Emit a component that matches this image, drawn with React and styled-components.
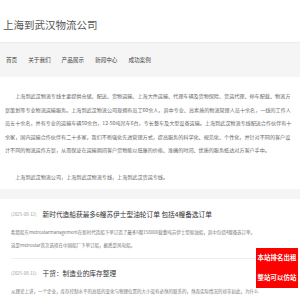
import React, { Fragment } from "react";
import styled, { createGlobalStyle } from "styled-components";

const GlobalStyle = createGlobalStyle`
    body {
        margin: 0;
        background: #fff;
        font-family: "Noto Sans CJK SC", "Noto Sans", sans-serif;
    }
`;

const Header = styled.div`
    height: 42px;
    display: flex;
    align-items: center;
    padding: 6px 0 0 3px;
    box-sizing: border-box;
`;

const SiteTitle = styled.h1`
    margin: 0;
    font-size: 10.5px;
    font-weight: normal;
    color: #555;
`;

const Nav = styled.div`
    height: 35px;
    display: flex;
    align-items: center;
    gap: 11px;
    padding-left: 6px;
    background: #f5f5f5;
    border-top: 1px solid #ececec;
    box-sizing: border-box;
`;

const NavItem = styled.a`
    font-size: 5.6px;
    color: #444;
    text-decoration: none;
`;

const Intro = styled.div`
    padding: 12px 5px 5px 5px;
`;

const Paragraph = styled.p`
    margin: 0;
    font-size: 5.1px;
    line-height: 13.5px;
    color: #666;
    text-indent: 2em;
    & + & {
        margin-top: 13.5px;
    }
`;

const Band = styled.div`
    height: 10px;
    background: #f5f5f5;
`;

const NewsList = styled.div`
    padding: 0 6px 0 11px;
`;

const NewsItem = styled.div`
    padding: ${(p) => (p.first ? "8px" : "7px")} 0 6px;
    border-bottom: 1px solid #eee;
`;

const NewsHead = styled.div`
    display: flex;
    align-items: center;
    gap: 6px;
    height: 14px;
    margin-bottom: 5px;
`;

const NewsDate = styled.span`
    font-size: 4.4px;
    color: #999;
`;

const NewsTitle = styled.span`
    font-size: 6.7px;
    color: #333;
`;

const NewsSummary = styled.p`
    margin: 0;
    font-size: 4.5px;
    line-height: 13px;
    color: #777;
`;

const Badge = styled.div`
    position: fixed;
    right: 2px;
    top: 248px;
    width: 42px;
    height: 40px;
    background: #ff0000;
    color: #fff;
    font-size: 6.4px;
    font-weight: bold;
    line-height: 20px;
    text-align: center;
    letter-spacing: 0.1px;
`;

const navItems = ["首页", "关于我们", "产品展示", "新闻中心", "成功案例"];

const news = [
    {
        date: "(2025-08-12)",
        title: "新时代造船获最多6艘苏伊士型油轮订单 包括4艘备选订单",
        lines: [
            "希腊船东metrostarmanagement在新时代造船下单订造了最多6艘158000载重吨苏伊士型原油船，其中包括4艘备选订单。",
            "这是metrostar首次选择在中国船厂下单订船，据悉是风电船。",
        ],
    },
    {
        date: "(2025-08-11)",
        title: "干货：制造业的库存整理",
        lines: [
            "从理论上讲，一个企业，库存控制水平的高低的变化与物理位置的大小没有必然的联系的，然而实际情况的却非如此，为什么",
        ],
    },
];

export default function App() {
    return (
        <Fragment>
            <GlobalStyle />
            <Header>
                <SiteTitle>上海到武汉物流公司</SiteTitle>
            </Header>
            <Nav>
                {navItems.map((item) => (
                    <NavItem key={item}>{item}</NavItem>
                ))}
            </Nav>
            <Intro>
                <Paragraph>
                    上海到武汉物流专线主要提供仓储、配送、货物运输、上海大件运输、代理车辆及货物保险、货运代理、停车配载、物流方案策划等专业物流运输服务。上海到武汉物流公司现拥有员工60余人，其中专业、高素质的物流管理人员十余名，一线的工作人员五十余名，并有专业的运输车辆50余台，12-50吨吊车6台，专长整车及大型设备运输。上海到武汉物流专线配送合作伙伴有十余家，国内运输合作伙伴有二十多家，我们不断强化先进管理方式，提高服务的科学化、规范化、个性化，并针对不同的客户设计不同的物流运作方案，从而保证在运输期间客户货物能以低廉的价格、准确的时间、优质的服务抵达对方客户手中。
                </Paragraph>
                <Paragraph>
                    上海到武汉物流公司，上海到武汉物流专线，上海到武汉货运专线。
                </Paragraph>
            </Intro>
            <Band />
            <NewsList>
                {news.map((n, i) => (
                    <NewsItem key={n.date} first={i === 0}>
                        <NewsHead>
                            <NewsDate>{n.date}</NewsDate>
                            <NewsTitle>{n.title}</NewsTitle>
                        </NewsHead>
                        {n.lines.map((l) => (
                            <NewsSummary key={l}>{l}</NewsSummary>
                        ))}
                    </NewsItem>
                ))}
            </NewsList>
            <Badge>
                本站排名出租
                <br />
                整站可以仿站
            </Badge>
        </Fragment>
    );
}
